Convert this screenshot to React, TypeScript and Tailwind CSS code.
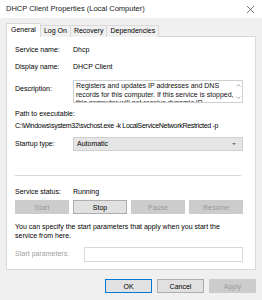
import React from 'react';

const tabs = ['General', 'Log On', 'Recovery', 'Dependencies'];

const Btn: React.FC<{ label: string; disabled?: boolean; primary?: boolean; className?: string }> = ({ label, disabled, primary, className = '' }) => (
  <div
    className={`h-[14px] flex items-center justify-center border text-[7px] leading-none ${
      disabled
        ? 'bg-[#cccccc] border-[#cccccc] text-[#9a9a9a]'
        : primary
        ? 'bg-[#e1e1e1] border-[#0078d7] text-black'
        : 'bg-[#e1e1e1] border-[#adadad] text-black'
    } ${className}`}
  >
    {label}
  </div>
);

const App: React.FC = () => {
  return (
    <div
      className="w-[262px] h-[300px] bg-[#f0f0f0] flex flex-col overflow-hidden text-black"
      style={{ fontFamily: '"Liberation Sans", Arial, sans-serif' }}
    >
      {/* Title bar */}
      <div className="h-[18px] bg-white flex items-center justify-between pl-[6px] pr-[8px]">
        <span className="text-[7.5px] text-[#222]">DHCP Client Properties (Local Computer)</span>
        <svg width="7" height="7" viewBox="0 0 7 7" stroke="#555" strokeWidth="0.8">
          <path d="M0 0 7 7M7 0 0 7" />
        </svg>
      </div>

      {/* Tabs */}
      <div className="flex items-end pl-[6px] mt-[5px] h-[14px] relative z-10">
        {tabs.map((t, i) =>
          i === 0 ? (
            <div key={t} className="h-[14px] px-[4px] bg-white border border-b-0 border-[#d9d9d9] flex items-center text-[7px]">
              {t}
            </div>
          ) : (
            <div key={t} className="h-[12px] px-[3px] border border-l-0 border-b-0 border-[#d9d9d9] flex items-center text-[7px] bg-[#f0f0f0]">
              {t}
            </div>
          )
        )}
      </div>

      {/* Panel */}
      <div className="ml-[6px] w-[250px] h-[234px] bg-white border border-[#d9d9d9] -mt-px pl-[8px] pr-[12px] text-[7px]">
        <div className="flex h-[12px] items-center mt-[7px]">
          <span className="w-[58px]">Service name:</span>
          <span>Dhcp</span>
        </div>
        <div className="flex h-[12px] items-center mt-[5px]">
          <span className="w-[58px]">Display name:</span>
          <span>DHCP Client</span>
        </div>
        <div className="flex mt-[7px]">
          <span className="w-[58px] pt-[4px]">Description:</span>
          <div className="flex-1 h-[23px] border border-[#cfcfcf] flex overflow-hidden">
            <div className="flex-1 pl-[2px] pt-px leading-[8.5px] text-[#111]">
              Registers and updates IP addresses and DNS records for this computer. If this service is stopped, this computer will not receive dynamic IP addresses
            </div>
            <div className="w-[8px] flex flex-col items-center justify-between py-[3px]">
              <svg width="5" height="3" viewBox="0 0 5 3" fill="none" stroke="#888" strokeWidth="0.7"><path d="M0.5 2.5 2.5 0.5 4.5 2.5" /></svg>
              <svg width="5" height="3" viewBox="0 0 5 3" fill="none" stroke="#888" strokeWidth="0.7"><path d="M0.5 0.5 2.5 2.5 4.5 0.5" /></svg>
            </div>
          </div>
        </div>
        <div className="h-[12px] flex items-center mt-[5px]">Path to executable:</div>
        <div className="h-[12px] flex items-center whitespace-nowrap tracking-[-0.3px]">C:\Windows\system32\svchost.exe -k LocalServiceNetworkRestricted -p</div>
        <div className="flex items-center mt-[5px]">
          <span className="w-[58px]">Startup type:</span>
          <div className="flex-1 h-[14px] bg-[#e5e5e5] border border-[#d0d0d0] flex items-center justify-between pl-[3px] pr-[6px]">
            <span>Automatic</span>
            <svg width="4" height="2" viewBox="0 0 4 2"><path d="M0 0h4L2 2z" fill="#777" /></svg>
          </div>
        </div>
        <div className="h-px bg-[#d9d9d9] mt-[24px] mr-[2px]" />
        <div className="flex h-[12px] items-center mt-[10px]">
          <span className="w-[58px]">Service status:</span>
          <span>Running</span>
        </div>
        <div className="grid grid-cols-4 gap-[4px] mt-[2px]">
          <Btn label="Start" disabled />
          <Btn label="Stop" />
          <Btn label="Pause" disabled />
          <Btn label="Resume" disabled />
        </div>
        <div className="mt-[8px] leading-[9px]">
          You can specify the start parameters that apply when you start the service from here.
        </div>
        <div className="flex items-center mt-[7px]">
          <span className="w-[69px] text-[#a0a0a0]">Start parameters:</span>
          <div className="flex-1 h-[15px] border border-[#d9d9d9] bg-white" />
        </div>
      </div>

      {/* Dialog buttons */}
      <div className="flex justify-end gap-[5px] pr-[6px] mt-[9px]">
        <Btn label="OK" primary className="w-[47px]" />
        <Btn label="Cancel" className="w-[47px]" />
        <Btn label="Apply" disabled className="w-[47px]" />
      </div>
    </div>
  );
};

export default App;
